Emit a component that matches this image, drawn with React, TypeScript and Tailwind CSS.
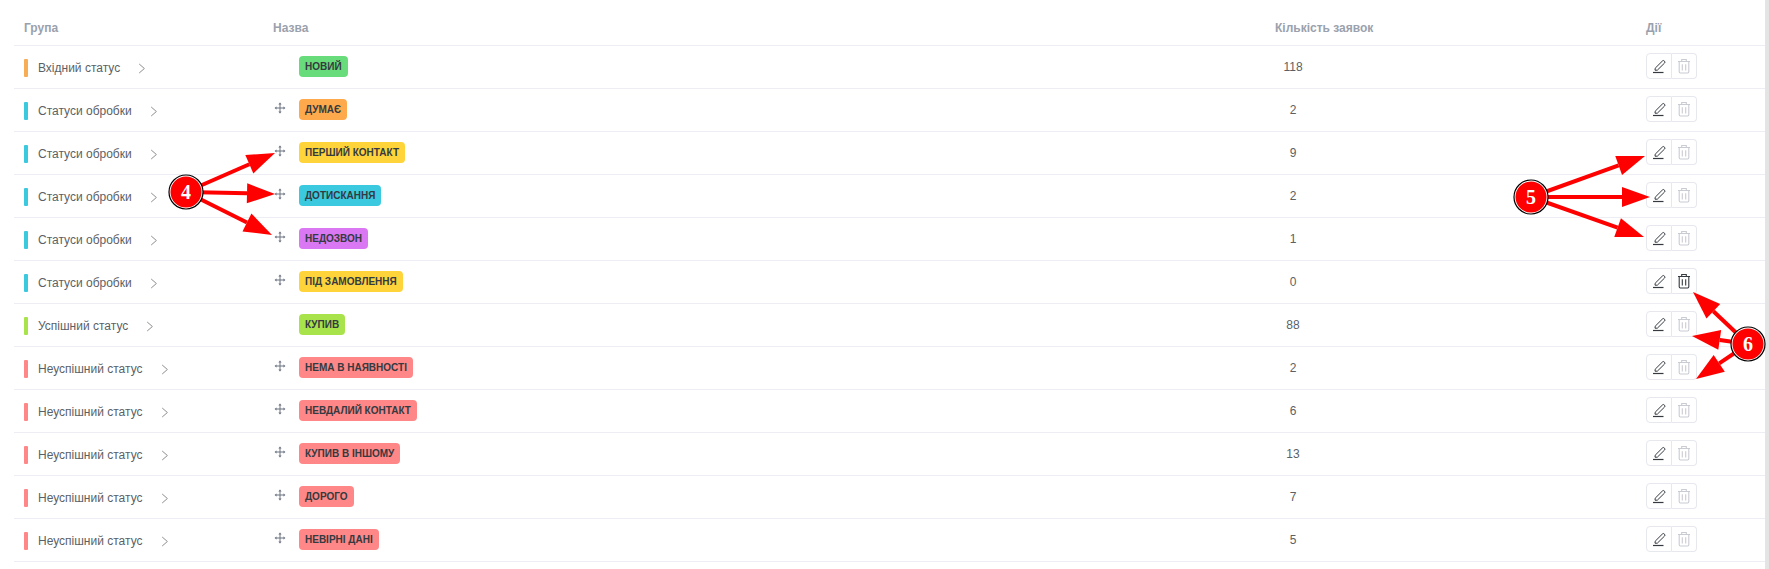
import { AiOutlineDrag } from "react-icons/ai";

const columns = "grid grid-cols-[259px_1002px_371px_80px] items-center";

const rows = [
  { group: "Вхідний статус", bar: "bg-[#f6ad55]", name: "НОВИЙ", badge: "bg-[#68dc7a]", count: 118, drag: false },
  { group: "Статуси обробки", bar: "bg-[#3ac9de]", name: "ДУМАЄ", badge: "bg-[#ffa94d]", count: 2, drag: true },
  { group: "Статуси обробки", bar: "bg-[#3ac9de]", name: "ПЕРШИЙ КОНТАКТ", badge: "bg-[#ffd43b]", count: 9, drag: true },
  { group: "Статуси обробки", bar: "bg-[#3ac9de]", name: "ДОТИСКАННЯ", badge: "bg-[#3ac9de]", count: 2, drag: true },
  { group: "Статуси обробки", bar: "bg-[#3ac9de]", name: "НЕДОЗВОН", badge: "bg-[#da77f2]", count: 1, drag: true },
  { group: "Статуси обробки", bar: "bg-[#3ac9de]", name: "ПІД ЗАМОВЛЕННЯ", badge: "bg-[#ffd43b]", count: 0, drag: true, canDelete: true },
  { group: "Успішний статус", bar: "bg-[#a9e34b]", name: "КУПИВ", badge: "bg-[#a9e34b]", count: 88, drag: false },
  { group: "Неуспішний статус", bar: "bg-[#ff8787]", name: "НЕМА В НАЯВНОСТІ", badge: "bg-[#ff8787]", count: 2, drag: true },
  { group: "Неуспішний статус", bar: "bg-[#ff8787]", name: "НЕВДАЛИЙ КОНТАКТ", badge: "bg-[#ff8787]", count: 6, drag: true },
  { group: "Неуспішний статус", bar: "bg-[#ff8787]", name: "КУПИВ В ІНШОМУ", badge: "bg-[#ff8787]", count: 13, drag: true },
  { group: "Неуспішний статус", bar: "bg-[#ff8787]", name: "ДОРОГО", badge: "bg-[#ff8787]", count: 7, drag: true },
  { group: "Неуспішний статус", bar: "bg-[#ff8787]", name: "НЕВІРНІ ДАНІ", badge: "bg-[#ff8787]", count: 5, drag: true },
];

function EditIcon() {
  return (
    <svg width="16" height="16" viewBox="0 0 16 16" fill="none" stroke="currentColor" strokeWidth="1">
      <path d="M4.2 10.2 11.4 3a1.3 1.3 0 0 1 1.9 0l.2.2a1.3 1.3 0 0 1 0 1.9L6.3 12.2H4l.2-2Z" strokeLinejoin="round" />
      <path d="M2 14.5h10.5" strokeWidth="1.2" />
    </svg>
  );
}

function TrashIcon() {
  return (
    <svg width="14" height="16" viewBox="0 0 14 16" fill="none" stroke="currentColor" strokeWidth="1.1">
      <path d="M1 3.5h12M4.7 3.3V1.5h4.6v1.8" />
      <path d="M2.2 3.5v10.3c0 .8.5 1.2 1.2 1.2h7.2c.7 0 1.2-.4 1.2-1.2V3.5" />
      <path d="M5.3 6.2v6.2M8.7 6.2v6.2" />
    </svg>
  );
}

function Chevron() {
  return (
    <svg className="ml-[18px] text-[#8f8f8f]" width="8" height="11" viewBox="0 0 8 11" fill="none" stroke="currentColor" strokeWidth="1">
      <path d="M1.2 1 6.4 5.5 1.2 10" />
    </svg>
  );
}

function Arrow({ from, to }: { from: [number, number]; to: [number, number] }) {
  const dx = to[0] - from[0];
  const dy = to[1] - from[1];
  const len = Math.hypot(dx, dy);
  const ux = dx / len;
  const uy = dy / len;
  const bx = to[0] - ux * 28;
  const by = to[1] - uy * 28;
  return (
    <g>
      <line x1={from[0]} y1={from[1]} x2={bx} y2={by} stroke="#ff0000" strokeWidth="4" />
      <polygon fill="#ff0000" points={`${to[0]},${to[1]} ${bx - uy * 10},${by + ux * 10} ${bx + uy * 10},${by - ux * 10}`} />
    </g>
  );
}

function Marker({ x, y, label }: { x: number; y: number; label: string }) {
  return (
    <g>
      <circle cx={x} cy={y} r="17" fill="#fff" stroke="#000" strokeWidth="1.2" />
      <circle cx={x} cy={y} r="15.5" fill="#ff0000" />
      <text x={x} y={y + 7} textAnchor="middle" fill="#fff" fontSize="20" fontWeight="700" fontFamily="'Liberation Serif', serif">
        {label}
      </text>
    </g>
  );
}

export default function App() {
  return (
    <div className="relative flex h-[569px] w-[1769px] overflow-hidden bg-white font-['Liberation_Sans',sans-serif]">
      <div className="w-[1765px] pl-[14px]">
        <div className={`${columns} h-[46px] border-b border-[#eceef3] pt-[11px] text-[12px] font-bold text-[#9aa1ad]`}>
          <div className="pl-[10px]">Група</div>
          <div>Назва</div>
          <div>Кількість заявок</div>
          <div>Дії</div>
        </div>
        {rows.map((row, i) => (
          <div key={i} className={`${columns} h-[43px] border-b border-[#eceef3]`}>
            <div className="flex items-center pl-[10px] pt-[2px] text-[12px] text-[#5b5f66]">
              <span className={`h-[18px] w-[4px] rounded-[1px] ${row.bar}`} />
              <span className="ml-[10px]">{row.group}</span>
              <Chevron />
            </div>
            <div className="flex items-center pb-[2px]">
              <span className="w-[26px] text-[#6b7280]">{row.drag && <AiOutlineDrag className="mt-[-2px] h-[14px] w-[14px]" />}</span>
              <span className={`flex h-[21px] items-center rounded-[4px] px-[6px] text-[10px] font-bold text-[#343a40] ${row.badge}`}>
                {row.name}
              </span>
            </div>
            <div className="w-[36px] pb-[1px] text-center text-[12px] text-[#5b5f66]">{row.count}</div>
            <div className="flex pb-[2px]">
              <div className="flex h-[26px] w-[26px] items-center justify-center rounded-l-[4px] border border-[#e6e8ee] text-[#343a40]">
                <EditIcon />
              </div>
              <div className={`flex h-[26px] w-[25px] items-center justify-center rounded-r-[4px] border border-l-0 border-[#e6e8ee] ${row.canDelete ? "text-[#343a40]" : "text-[#c9ccd3]"}`}>
                <TrashIcon />
              </div>
            </div>
          </div>
        ))}
      </div>
      <div className="w-[4px] bg-[#e4e4e4]" />

      {/* callouts drawn over the table */}
      <svg className="absolute inset-0" width="1769" height="569">
        <Arrow from={[186, 192]} to={[275, 153]} />
        <Arrow from={[186, 192]} to={[275, 194]} />
        <Arrow from={[186, 192]} to={[272, 235]} />
        <Marker x={186} y={192} label="4" />
        <Arrow from={[1531, 197]} to={[1645, 156]} />
        <Arrow from={[1531, 197]} to={[1650, 197]} />
        <Arrow from={[1531, 197]} to={[1644, 237]} />
        <Marker x={1531} y={197} label="5" />
        <Arrow from={[1748, 344]} to={[1693, 292]} />
        <Arrow from={[1748, 344]} to={[1692, 336]} />
        <Arrow from={[1748, 344]} to={[1696, 379]} />
        <Marker x={1748} y={344} label="6" />
      </svg>
    </div>
  );
}
